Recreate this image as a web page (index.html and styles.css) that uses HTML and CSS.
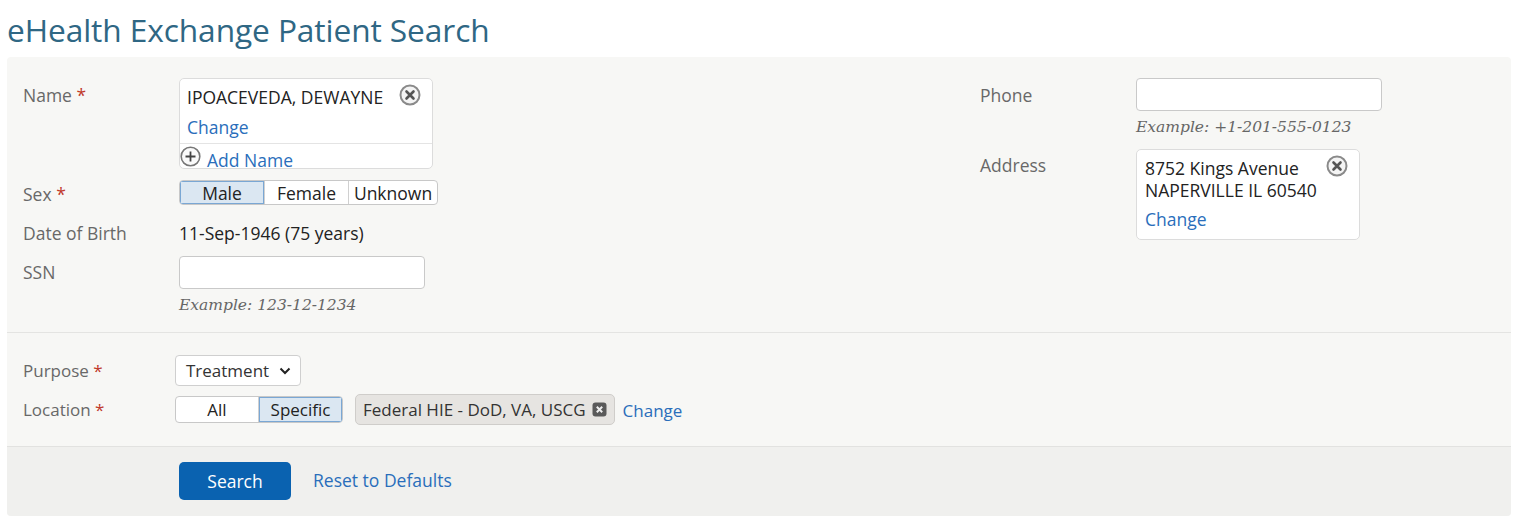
FILE: index.html
```html
<!DOCTYPE html>
<html>
<head>
<meta charset="utf-8">
<link rel="stylesheet" href="styles.css">
</head>
<body>
<h1 class="title">eHealth Exchange Patient Search</h1>
<div class="panel">
  <div class="section demographics">
    <div class="col col-left">
      <div class="row row-name">
        <div class="label">Name <span class="req">*</span></div>
        <div class="field">
          <div class="card name-card">
            <div class="card-body">
              <div class="card-line">
                <span>IPOACEVEDA, DEWAYNE</span>
                <svg class="remove" width="22" height="22" viewBox="0 0 22 22"><circle cx="11" cy="11" r="9.5" fill="#f4f4f4" stroke="#8a8a8a" stroke-width="2"/><path d="M7.5 7.5 L14.5 14.5 M14.5 7.5 L7.5 14.5" stroke="#555" stroke-width="2.6" stroke-linecap="round"/></svg>
              </div>
              <a class="link" href="#">Change</a>
            </div>
            <div class="card-add">
              <svg class="plus" width="21" height="21" viewBox="0 0 21 21"><circle cx="10.5" cy="10.5" r="9.3" fill="#fafafa" stroke="#777" stroke-width="1.6"/><path d="M10.5 5.5 V15.5 M5.5 10.5 H15.5" stroke="#444" stroke-width="1.8"/></svg>
              <a class="link add-link" href="#">Add Name</a>
            </div>
          </div>
        </div>
      </div>
      <div class="row row-sex">
        <div class="label">Sex <span class="req">*</span></div>
        <div class="field">
          <div class="seg seg-sex">
            <span class="seg-item selected w84">Male</span>
            <span class="seg-item w84">Female</span>
            <span class="seg-item w90">Unknown</span>
          </div>
        </div>
      </div>
      <div class="row row-dob">
        <div class="label">Date of Birth</div>
        <div class="field value">11-Sep-1946 (75 years)</div>
      </div>
      <div class="row row-ssn">
        <div class="label">SSN</div>
        <div class="field">
          <div class="input ssn-input"></div>
          <div class="example">Example: 123-12-1234</div>
        </div>
      </div>
    </div>
    <div class="col col-right">
      <div class="row row-phone">
        <div class="label">Phone</div>
        <div class="field">
          <div class="input phone-input"></div>
          <div class="example">Example: +1-201-555-0123</div>
        </div>
      </div>
      <div class="row row-address">
        <div class="label">Address</div>
        <div class="field">
          <div class="card address-card">
            <div class="card-body">
              <div class="card-line">
                <span>8752 Kings Avenue<br>NAPERVILLE IL 60540</span>
                <svg class="remove" width="22" height="22" viewBox="0 0 22 22"><circle cx="11" cy="11" r="9.5" fill="#f4f4f4" stroke="#8a8a8a" stroke-width="2"/><path d="M7.5 7.5 L14.5 14.5 M14.5 7.5 L7.5 14.5" stroke="#555" stroke-width="2.6" stroke-linecap="round"/></svg>
              </div>
              <a class="link change-addr" href="#">Change</a>
            </div>
          </div>
        </div>
      </div>
    </div>
  </div>
  <div class="section query">
    <div class="row row-purpose">
      <div class="label label-q">Purpose <span class="req">*</span></div>
      <div class="select">Treatment
        <svg width="12" height="8" viewBox="0 0 12 8"><path d="M1.5 1.5 L6 6 L10.5 1.5" fill="none" stroke="#222" stroke-width="2"/></svg>
      </div>
    </div>
    <div class="row row-location">
      <div class="label label-q">Location <span class="req">*</span></div>
      <div class="seg seg-loc">
        <span class="seg-item w82">All</span>
        <span class="seg-item selected w84">Specific</span>
      </div>
      <div class="tag">Federal HIE - DoD, VA, USCG
        <svg width="15" height="15" viewBox="0 0 15 15"><rect x="0.5" y="0.5" width="14" height="14" rx="3" fill="#5a5a5a"/><path d="M4.8 4.8 L10.2 10.2 M10.2 4.8 L4.8 10.2" stroke="#eee" stroke-width="2"/></svg>
      </div>
      <a class="link" href="#">Change</a>
    </div>
  </div>
  <div class="footer">
    <button class="btn-primary">Search</button>
    <a class="link" href="#">Reset to Defaults</a>
  </div>
</div>
</body>
</html>
```
FILE: styles.css
```css
* { box-sizing: border-box; }
body {
  margin: 0;
  font-family: "Open Sans", "Noto Sans", sans-serif;
  font-size: 17.5px;
  color: #222;
  background: #fff;
}
.title {
  margin: 0;
  height: 57px;
  padding: 10px 0 0 7px;
  font-size: 31.7px;
  font-weight: 400;
  line-height: 40px;
  color: #2f6784;
  letter-spacing: -0.1px;
}
.panel {
  margin: 0 4px 0 7px;
  background: #f7f7f5;
  border-radius: 4px;
  overflow: hidden;
}
.section.demographics {
  display: flex;
  padding: 21px 16px 0 16px;
  height: 276px;
  border-bottom: 1px solid #e4e4e2;
}
.col-left { width: 957px; }
.col-right { flex: 1; }
.row { display: flex; }
.label {
  width: 156px;
  flex: none;
  color: #686868;
  line-height: 22px;
}
.req { color: #c0392b; }
.row-name .label { padding-top: 6px; }
.row-sex { margin-top: 11px; }
.row-sex .label { padding-top: 3px; }
.row-dob { margin-top: 17px; }
.row-ssn { margin-top: 12px; }
.row-ssn .label { padding-top: 5px; }
.value { line-height: 22px; color: #222; }

.card {
  background: #fff;
  border: 1px solid #dcdcdc;
  border-radius: 5px;
}
.name-card { width: 254px; height: 91px; }
.card-body { padding: 7px 11px 5px 7px; }
.card-line {
  display: flex;
  justify-content: space-between;
  align-items: flex-start;
  line-height: 22px;
}
.card-line .remove { margin-top: -2px; }
.link {
  color: #2a6ebb;
  text-decoration: none;
  line-height: 22px;
}
.card-body .link { display: block; margin-top: 8px; }
.card-add {
  border-top: 1px solid #e4e4e4;
  display: flex;
  align-items: flex-start;
  height: 22px;
}
.card-add .plus { margin-top: 2px; }
.add-link { margin-left: 6px; margin-top: 8px; line-height: 16px; }

.seg {
  display: flex;
  border: 1px solid #c8c8c8;
  border-radius: 4px;
  background: #fff;
  overflow: hidden;
}
.seg-item {
  display: flex;
  align-items: center;
  justify-content: center;
  border-left: 1px solid #d0d0d0;
  color: #222;
}
.seg-item:first-child { border-left: none; }
.seg-item.selected {
  background: #dbe7f2;
  box-shadow: inset 0 0 0 1px #7aa7d4;
}
.seg-sex { height: 25px; width: 259px; }
.seg-sex .seg-item { height: 23px; }
.w84 { width: 84px; }
.w90 { width: 90px; flex: 1; }
.w82 { width: 82px; }

.input {
  background: #fff;
  border: 1px solid #c9c9c9;
  border-radius: 4px;
  height: 33px;
}
.ssn-input { width: 246px; }
.phone-input { width: 246px; }
.example {
  font-family: "DejaVu Serif", "Liberation Serif", serif;
  font-style: italic;
  font-size: 15.5px;
  color: #666;
  line-height: 20px;
  margin-top: 6px;
}
.col-right .label { padding-top: 6px; }
.row-address { margin-top: 12px; }
.row-address .label { padding-top: 5px; }
.address-card { width: 224px; height: 91px; }
.address-card .card-body { padding: 7px 11px 6px 8px; }
.address-card .change-addr { margin-top: 7px; }

.section.query {
  padding: 22px 16px 0 16px;
  height: 114px;
  border-bottom: 1px solid #e2e2e0;
  font-size: 17px;
}
.label-q { width: 152px; }
.row-purpose { align-items: center; }
.select {
  display: flex;
  align-items: center;
  gap: 10px;
  height: 31px;
  padding: 0 9px 0 10px;
  background: #fff;
  border: 1px solid #cfcfcf;
  border-radius: 4px;
  color: #333;
}
.row-location { margin-top: 8px; align-items: center; }
.seg-loc { height: 27px; }
.seg-loc .seg-item { height: 25px; }
.tag {
  display: flex;
  align-items: center;
  gap: 6px;
  height: 31px;
  margin-left: 12px;
  padding: 0 7px 0 7px;
  background: #e6e4e1;
  border: 1px solid #cfcdca;
  border-radius: 5px;
  color: #333;
}
.row-location .link { margin-left: 8px; margin-top: 2px; }

.footer {
  background: #f0f0ee;
  height: 69px;
  display: flex;
  align-items: flex-start;
  padding: 15px 0 0 172px;
  gap: 22px;
}
.btn-primary {
  width: 112px;
  height: 38px;
  background: #0a62b0;
  color: #fff;
  border: none;
  border-radius: 5px;
  font-family: "Open Sans", "Noto Sans", sans-serif;
  font-size: 17.5px;
}
.footer .link { margin-top: 7px; }
```
